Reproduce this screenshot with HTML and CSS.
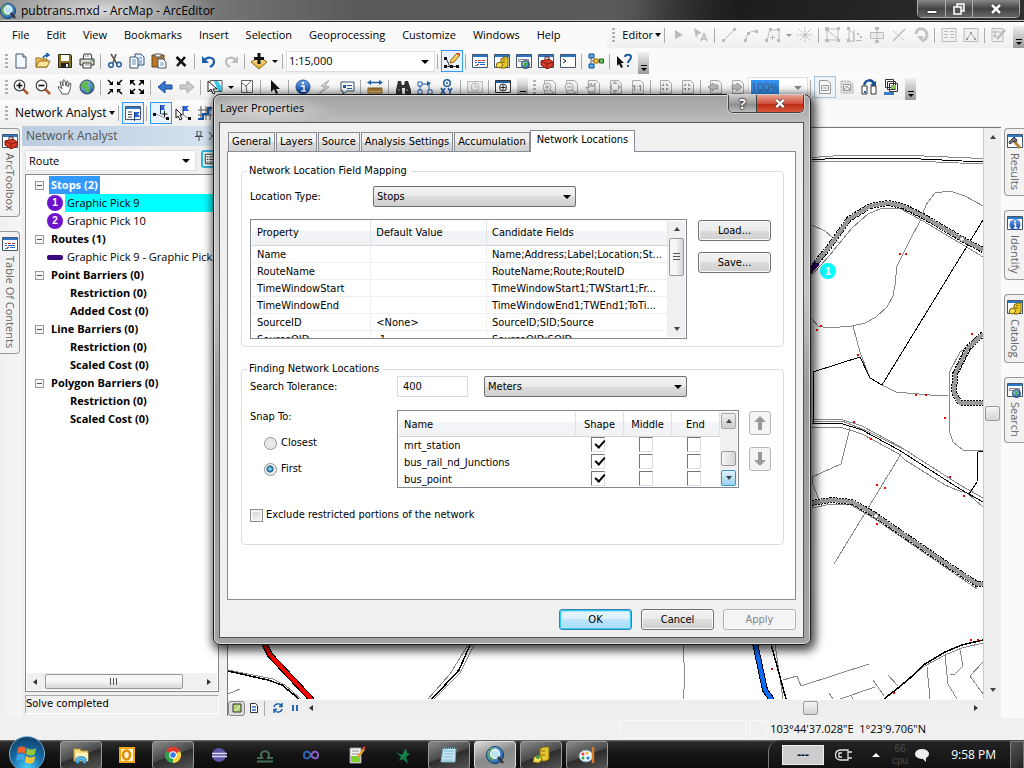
FILE: index.html
```html
<!DOCTYPE html>
<html lang="en">
<head>
<meta charset="utf-8">
<title>pubtrans.mxd - ArcMap - ArcEditor</title>
<link rel="stylesheet" href="styles.css">
</head>
<body>
<svg class="defs" aria-hidden="true">
  <defs>
    <linearGradient id="g-blue" x1="0" y1="0" x2="0" y2="1"><stop offset="0" stop-color="#6fa8ee"/><stop offset="1" stop-color="#0a3fa0"/></linearGradient>
    <linearGradient id="g-gold" x1="0" y1="0" x2="0" y2="1"><stop offset="0" stop-color="#fff0b0"/><stop offset="1" stop-color="#e0a020"/></linearGradient>
    <radialGradient id="g-globe" cx=".35" cy=".3" r=".8"><stop offset="0" stop-color="#a8dcff"/><stop offset="1" stop-color="#12509c"/></radialGradient>
  </defs>
  <symbol id="new" viewBox="0 0 16 16"><path d="M3 1h7l3 3v11H3z" fill="#f4f9ff" stroke="#44566e"/><path d="M10 1v3h3" fill="#cfe0f2" stroke="#44566e"/></symbol>
  <symbol id="open" viewBox="0 0 16 16"><path d="M1 14V5h4l1 1h6v8z" fill="#f2c862" stroke="#96690e"/><path d="M1 14l3-6h11l-3 6z" fill="#ffe69c" stroke="#96690e"/><path d="M8 5c1-3 3-3 5-3M11 0l3 2-3 2" fill="none" stroke="#145ca8" stroke-width="1.5"/></symbol>
  <symbol id="save" viewBox="0 0 16 16"><path d="M1.500 1.500h12l1 1v12h-13z" fill="#8a7420" stroke="#332b10"/><path d="M4 2h8v6H4z" fill="#fff"/><path d="M4 10h8v5H4z" fill="#222"/><path d="M9 11h2v3H9z" fill="#eee"/></symbol>
  <symbol id="print" viewBox="0 0 16 16"><path d="M4 6l1-5h7l1 5" fill="#fff" stroke="#333"/><path d="M1 6h14v6H1z" fill="#d8d8cc" stroke="#333"/><path d="M4 10h8v5H4z" fill="#fff" stroke="#333"/><path d="M6 3h4M6 12h5" stroke="#888"/><path d="M12 8h2" stroke="#2a2"/></symbol>
  <symbol id="cut" viewBox="0 0 16 16"><path d="M4 1l6 10M9 1l-3 9" stroke="#555" stroke-width="1.500"/><circle cx="4" cy="12" r="2.300" fill="none" stroke="#1f5fa5" stroke-width="1.500"/><circle cx="12" cy="11.500" r="2.300" fill="none" stroke="#1f5fa5" stroke-width="1.500"/></symbol>
  <symbol id="copy" viewBox="0 0 16 16"><path d="M6 1h6l3 3v8H6z" fill="#e4f0ff" stroke="#34506e"/><path d="M1 4h6l2 2v9H1z" fill="#fff" stroke="#34506e"/><path d="M3 7h4M3 9h4M3 11h4M9 5h4M10 8h3M10 10h3" stroke="#5a88ba"/></symbol>
  <symbol id="paste" viewBox="0 0 16 16"><path d="M1 2h12v12H1z" fill="#b87828" stroke="#6b4210"/><path d="M4 1h6v3H4z" fill="#eee" stroke="#555"/><path d="M7 6h5l3 3v6H7z" fill="#fff" stroke="#456"/><path d="M9 10h4M9 12h4" stroke="#69c"/></symbol>
  <symbol id="del" viewBox="0 0 16 16"><path d="M3.500 4l9 9M12 4l-8 9" stroke="#111" stroke-width="2.600"/></symbol>
  <symbol id="undo" viewBox="0 0 16 16"><path d="M3 8c3-5 10-4 10 1 0 3-2 4-4 5" fill="none" stroke="#1d5caa" stroke-width="2.200"/><path d="M1 3v7h7z" fill="#1d5caa"/></symbol>
  <symbol id="redo" viewBox="0 0 16 16"><path d="M13 8C10 3 3 4 3 9c0 3 2 4 4 5" fill="none" stroke="#bdbdbd" stroke-width="2.200"/><path d="M15 3v7H8z" fill="#bdbdbd"/></symbol>
  <symbol id="add" viewBox="0 0 16 16"><path d="M0 9l8-5 8 5-8 7z" fill="url(#g-gold)" stroke="#8d6414"/><path d="M8 0v11M3 5.500h10" stroke="#111" stroke-width="3"/></symbol>
  <symbol id="edit" viewBox="0 0 16 16"><path d="M2 5l4 9M2 13.500h12" stroke="#333" fill="none"/><path d="M0 4h3v3H0zM0 12h3v3H0zM6 12h3v3H6zM12 12h3v3h-3z" fill="#111"/><path d="M6 10l1-3 6-7 3 2-6 7z" fill="#ffd25a" stroke="#8a5b12"/><path d="M13 0l3 2" stroke="#d33" stroke-width="2"/></symbol>
  <symbol id="win" viewBox="0 0 16 16"><path d="M.500 1.500h15v13H.500z" fill="#fff" stroke="#44566e"/><path d="M1 2h14v2H1z" fill="#2b78c8"/></symbol>
  <symbol id="toc" viewBox="0 0 16 16"><use href="#win"/><path d="M3 7.500h2M6 7.500h3M10 7.500h3M5 11.500h2" stroke="#c33"/><path d="M3 9.500h2M6 9.500h7M8 11.500h5" stroke="#26c"/><path d="M3 12.500h3" stroke="#2a4"/></symbol>
  <symbol id="cat" viewBox="0 0 16 16"><use href="#win"/><path d="M7 6l3-2h4v9l-3 2H7z" fill="#e8c624" stroke="#786008"/><path d="M8 9h3M9 6.500h2" stroke="#786008"/><path d="M2 14l1-4 4-1 2 3-3 3z" fill="#f2dc56" stroke="#786008"/></symbol>
  <symbol id="search" viewBox="0 0 16 16"><use href="#win"/><path d="M2.500 6.500h10v2h-10z" fill="#eee" stroke="#889"/><circle cx="9.500" cy="11.500" r="4" fill="url(#g-globe)" stroke="#345"/><path d="M8 9l3 1-1 3-2 1z" fill="#4cae3c"/></symbol>
  <symbol id="toolbox" viewBox="0 0 16 16"><use href="#win"/><path d="M3 8l8-2 4 3v4l-6 3-6-4z" fill="#d83a28" stroke="#801a10"/><path d="M3 8l6 3 6-2M9 11v5" stroke="#801a10" fill="none"/><path d="M7 7V4h4v3" fill="none" stroke="#622"/></symbol>
  <symbol id="py" viewBox="0 0 16 16"><use href="#win"/><path d="M3 6l3 2-3 2" fill="none" stroke="#222"/></symbol>
  <symbol id="model" viewBox="0 0 16 16"><path d="M3 3v10M4 8h9" stroke="#555"/><path d="M1 1h5v4H1zM1 11h5v4H1z" fill="#5cacf0" stroke="#124b94"/><path d="M6 6h4v4H6z" fill="#ffcf49" stroke="#97660a"/><path d="M11.500 6h4v4h-4z" fill="#5fc45b" stroke="#19641a"/></symbol>
  <symbol id="whats" viewBox="0 0 16 16"><path d="M1 3v10l2-2 2 4 2-1-2-4h3z" fill="#111"/><path d="M9 4c0-3 6-3 6 0 0 3-3 3-3 6M12 12v2" fill="none" stroke="#1f5fa5" stroke-width="2"/></symbol>
  <symbol id="zin" viewBox="0 0 16 16"><path d="M10 10l5 5" stroke="#b2582a" stroke-width="2.500"/><circle cx="6.500" cy="6.500" r="5.300" fill="#fff" stroke="#444" stroke-width="1.200"/><path d="M6.500 3.500v6M3.500 6.500h6" stroke="#111" stroke-width="1.700"/></symbol>
  <symbol id="zout" viewBox="0 0 16 16"><path d="M10 10l5 5" stroke="#b2582a" stroke-width="2.500"/><circle cx="6.500" cy="6.500" r="5.300" fill="#fff" stroke="#444" stroke-width="1.200"/><path d="M3.500 6.500h6" stroke="#111" stroke-width="1.700"/></symbol>
  <symbol id="pan" viewBox="0 0 16 16"><path d="M5 15c-1-3-3-4-4-7 2-1 3 1 4 2L3 3c2-1 2 1 3 4L6 1c2-1 2 1 3 6l1-5c2 0 1 2 1 6l2-4c2 0 0 4 0 7l-2 4z" fill="#fff" stroke="#555"/></symbol>
  <symbol id="globe" viewBox="0 0 16 16"><circle cx="8" cy="8" r="7" fill="url(#g-globe)" stroke="#345"/><path d="M3 4l4-2 3 2-2 3 3 2-1 4-2 1-2-4-4-2z" fill="#5fb84a"/><path d="M12 5l2 2-1 3z" fill="#5fb84a"/></symbol>
  <symbol id="fin" viewBox="0 0 16 16"><path d="M1 1l4 4M15 1l-4 4M1 15l4-4M15 15l-4-4" stroke="currentColor" stroke-width="1.500"/><path d="M6 2v4H2zM10 2v4h4zM6 14v-4H2zM10 14v-4h4z" fill="currentColor"/></symbol>
  <symbol id="fout" viewBox="0 0 16 16"><path d="M2 2l4 4M14 2l-4 4M2 14l4-4M14 14l-4-4" stroke="currentColor" stroke-width="1.500"/><path d="M1 1h5L1 6zM15 1h-5l5 5zM1 15h5l-5-5zM15 15h-5l5-5z" fill="currentColor"/></symbol>
  <symbol id="back" viewBox="0 0 16 16"><path d="M1 8l7-6v4h7v4H8v4z" fill="#3878d0" stroke="#184a98"/></symbol>
  <symbol id="fwd" viewBox="0 0 16 16"><path d="M15 8L8 2v4H1v4h7v4z" fill="#ccc" stroke="#aaa"/></symbol>
  <symbol id="selfeat" viewBox="0 0 16 16"><path d="M3 1.500h12v11H3z" fill="#fff" stroke="#555"/><path d="M7 2h4l4 7v3h-4z" fill="#34c8e8"/><path d="M1 2v11l3-3 2 5 2-1-2-4h4z" fill="#fff" stroke="#222"/></symbol>
  <symbol id="clear" viewBox="0 0 16 16"><path d="M2.500 1.500h11v12h-11z" fill="#fff" stroke="#666"/><path d="M3 4l4 3 5-5M7 7l1 6" stroke="#666" fill="none"/></symbol>
  <symbol id="arrow" viewBox="0 0 16 16"><path d="M4 1v12l3-3 2 5 2-1-2-4h4z" fill="#111"/></symbol>
  <symbol id="info" viewBox="0 0 16 16"><circle cx="8" cy="8" r="7" fill="url(#g-blue)" stroke="#27549a"/><path d="M6 7h3v5M6 12h5" stroke="#fff" stroke-width="1.500" fill="none"/><circle cx="8" cy="4" r="1.200" fill="#fff"/></symbol>
  <symbol id="bolt" viewBox="0 0 16 16"><path d="M12 1L4 7l4 1-6 7 10-7-4-1z" fill="#ddd" stroke="#aaa"/></symbol>
  <symbol id="popup" viewBox="0 0 16 16"><path d="M2 3h13v9H8l-4 3v-3H2z" fill="#fff" stroke="#356"/><path d="M4 6h3v3H4z" fill="#1f5fa5"/><path d="M8 6.500h5M8 9.500h5" stroke="#1f5fa5"/></symbol>
  <symbol id="measure" viewBox="0 0 16 16"><path d="M1 9h14v5H1z" fill="#f1c36a" stroke="#8f5c12"/><path d="M3 9v3M5 9v3M7 9v3M9 9v3M11 9v3M13 9v3" stroke="#5e3c0c"/><path d="M2 3.500h12" stroke="#1f5fa5" stroke-width="1.500"/><path d="M0 3.500L4 1v5zM16 3.500L12 1v5z" fill="#1f5fa5"/></symbol>
  <symbol id="find" viewBox="0 0 16 16"><path d="M3 2h3l1 4h2l1-4h3l3 9v4h-6V9H7v6H1v-4z" fill="#333"/><path d="M3 11h2M11 11h2" stroke="#aaa"/></symbol>
  <symbol id="route" viewBox="0 0 16 16"><path d="M3 13V5h9v8" fill="none" stroke="#1f5fa5"/><path d="M1 3h4v4H1zM1 11h4v4H1zM11 11h4v4h-4z" fill="#fff" stroke="#1f5fa5"/><path d="M10 2l4 2-4 3z" fill="#1f5fa5"/></symbol>
  <symbol id="xy" viewBox="0 0 16 16"><circle cx="8" cy="4" r="3.300" fill="none" stroke="#1f5fa5" stroke-width="1.500"/><circle cx="8" cy="4" r="1" fill="#1f5fa5"/><path d="M2 9l4 6M6 9l-4 6M9 9l2 3 2-3M11 12v3" stroke="#1f5fa5" stroke-width="1.500" fill="none"/></symbol>
  <symbol id="clock" viewBox="0 0 16 16"><path d="M.500 2.500h15v11H.500z" fill="#eee" stroke="#bbb"/><circle cx="8" cy="8" r="4" fill="none" stroke="#bbb"/><path d="M8 5v3h2" stroke="#bbb" fill="none"/></symbol>
  <symbol id="mag" viewBox="0 0 16 16"><path d="M.500 1.500h15v12H.500z" fill="#fff" stroke="#333"/><path d="M1 2h14v2H1z" fill="#1f5fa5"/><circle cx="8" cy="8.500" r="3.500" fill="#fff" stroke="#222"/><path d="M8 6v5M5.500 8.500h5" stroke="#222"/></symbol>
  <symbol id="page" viewBox="0 0 16 16"><path d="M3.500 1.500h8l3 3v10h-11z" fill="#f2f2f2" stroke="#aaa"/></symbol>
  <symbol id="pzin" viewBox="0 0 16 16"><use href="#page"/><circle cx="6" cy="8" r="4" fill="#eee" stroke="#aaa"/><path d="M6 6v4M4 8h4M9 11l4 3" stroke="#999"/></symbol>
  <symbol id="pzout" viewBox="0 0 16 16"><use href="#page"/><circle cx="6" cy="8" r="4" fill="#eee" stroke="#aaa"/><path d="M4 8h4M9 11l4 3" stroke="#999"/></symbol>
  <symbol id="ppan" viewBox="0 0 16 16"><use href="#page"/><path d="M4 13L1 8l3 1-1-5 3 4V4l2 4 2-4v9z" fill="#eee" stroke="#999"/></symbol>
  <symbol id="pfull" viewBox="0 0 16 16"><use href="#page"/><path d="M8 2l3 3H5zM8 14l3-3H5zM2 8l3-3v6zM14 8l-3-3v6z" fill="#aaa"/></symbol>
  <symbol id="pone" viewBox="0 0 16 16"><use href="#page"/><path d="M5.500 6v6M11.500 6v6M4 7h1M10 7h1" stroke="#999" stroke-width="1.500"/><path d="M8 7h1v1H8zM8 10h1v1H8z" fill="#999"/></symbol>
  <symbol id="pfin" viewBox="0 0 16 16"><use href="#page"/><path d="M7 4v3H4zM9 4v3h3zM7 12V9H4zM9 12V9h3z" fill="#999"/></symbol>
  <symbol id="pback" viewBox="0 0 16 16"><use href="#page"/><path d="M1 8l5-4v2h5v4H6v2z" fill="#bbb" stroke="#999"/></symbol>
  <symbol id="pfwd" viewBox="0 0 16 16"><use href="#page"/><path d="M13 8L8 4v2H3v4h5v2z" fill="#bbb" stroke="#999"/></symbol>
  <symbol id="draft" viewBox="0 0 16 16"><path d="M2.500 1.500h8l3 3v10h-11z" fill="#f6f6f6" stroke="#999"/><path d="M4.500 6.500h7v5h-7zM6 9h4" stroke="#999" fill="none"/></symbol>
  <symbol id="frame" viewBox="0 0 16 16"><path d="M2 2h9l3 3v9H2z" fill="#ddd" stroke="#aaa" stroke-dasharray="2 1"/><path d="M4.500 5.500h7v6h-7z" fill="#eee" stroke="#999"/><path d="M5 11l3-4 3 4" stroke="#999" fill="none"/></symbol>
  <symbol id="swap" viewBox="0 0 16 16"><path d="M3 6c2-6 8-6 10-1" fill="none" stroke="#124e94" stroke-width="2.500"/><path d="M15 2v6l-6-2z" fill="#124e94"/><path d="M1 7h5v8H1zM10 7h5v8h-5z" fill="#fff" stroke="#333"/><path d="M3 12h2v2H3z" fill="#1f5fa5"/></symbol>
  <symbol id="ddp" viewBox="0 0 16 16"><path d="M2.500.500h8v8h-8zM4.500 2.500h8v8h-8zM6.500 4.500h8v8h-8z" fill="#fff" stroke="#333"/><path d="M8 6h5v4H8z" fill="#8bbf54"/><path d="M1 13h10v3H1z" fill="#3b7cc6"/></symbol>
  <symbol id="ea" viewBox="0 0 16 16"><path d="M4 3l8 5-8 4z" fill="#bbb"/></symbol>
  <symbol id="eb" viewBox="0 0 16 16"><path d="M1 1l8 5-4 1-2 4z" fill="#bbb"/><path d="M8 14l3-7 3 7M9 12h4" stroke="#bbb" stroke-width="1.500" fill="none"/></symbol>
  <symbol id="line" viewBox="0 0 16 16"><path d="M3 13L13 3" stroke="#bbb"/><path d="M1 12h3v3H1zM12 1h3v3h-3z" fill="#bbb"/></symbol>
  <symbol id="arc" viewBox="0 0 16 16"><path d="M3 13c0-6 4-9 10-9" stroke="#bbb" fill="none"/><path d="M1 12h3v3H1zM12 3h3v3h-3zM4 5h3v3H4z" fill="#bbb"/></symbol>
  <symbol id="poly" viewBox="0 0 16 16"><path d="M2 13L5 3h9v10" stroke="#bbb" fill="none"/><path d="M0 12h3v3H0zM4 1h3v3H4zM12 1h3v3h-3zM12 12h3v3h-3zM5 10h5v1H5zM7 8h1v5H7z" fill="#bbb"/></symbol>
  <symbol id="star" viewBox="0 0 16 16"><path d="M8 0v6M8 10v6M0 8h6M10 8h6M2 2l4 4M10 10l4 4M14 2l-4 4M6 10l-4 4" stroke="#bbb" stroke-dasharray="2 1"/><path d="M6 6h4v4H6z" fill="#ccc"/></symbol>
  <symbol id="resh" viewBox="0 0 16 16"><path d="M2 2h11v11H2zM2 3l11 9" stroke="#bbb" fill="none"/><path d="M0 0h4v4H0zM0 12h4v3H0zM12 12h3v3h-3zM12 0h3v3h-3z" fill="#bbb"/></symbol>
  <symbol id="cutp" viewBox="0 0 16 16"><path d="M2 2v12h5V7zM7 3v12" stroke="#bbb" fill="none"/><path d="M0 0h3v3H0zM0 12h3v3H0zM10 6h2v2h-2zM13 9h2v2h-2zM9 13h6v1H9z" fill="#bbb"/></symbol>
  <symbol id="split" viewBox="0 0 16 16"><path d="M1.500 5.500h13v6h-13zM8 0v16" fill="#ececec" stroke="#bbb"/><path d="M6 0h4v3H6zM6 13h4v3H6z" fill="#bbb"/></symbol>
  <symbol id="cross" viewBox="0 0 16 16"><path d="M2 14L14 2" stroke="#bbb" stroke-width="1.500"/><path d="M2 4l11 9" stroke="#bbb" stroke-dasharray="2 1"/></symbol>
  <symbol id="rot" viewBox="0 0 16 16"><path d="M3 7c0-7 10-7 11 1 0 3-2 5-5 6" fill="none" stroke="#c4c4c4" stroke-width="3"/><path d="M4 9h6l-1 6z" fill="#c4c4c4"/></symbol>
  <symbol id="attr" viewBox="0 0 16 16"><path d="M1 1.500h14v13H1z" fill="#f1f1f1" stroke="#bbb"/><path d="M3 4.500h4M9 4.500h4M3 7.500h4M9 7.500h4M3 10.500h4M9 10.500h4" stroke="#bbb"/></symbol>
  <symbol id="sketch" viewBox="0 0 16 16"><path d="M1 1.500h14v13H1z" fill="#f1f1f1" stroke="#bbb"/><path d="M4 12l4-6 4 6" stroke="#aaa" fill="none"/><path d="M3 11h2v2H3zM7 5h2v2H7zM11 11h2v2h-2z" fill="#999"/></symbol>
  <symbol id="tmpl" viewBox="0 0 16 16"><path d="M1 1.500h11v13H1z" fill="#f1f1f1" stroke="#bbb"/><path d="M3 4h2v2H3zM3 8h2v2H3zM6 5h4" fill="#bbb" stroke="#bbb"/><path d="M6 12l8-9" stroke="#bbb" stroke-width="2.500"/></symbol>
  <symbol id="flag" viewBox="0 0 16 16"><path d="M8 1h6l-2 2 2 3H8z" fill="#2a68d8"/><path d="M8 1v9" stroke="#123a80"/></symbol>
  <symbol id="nawin" viewBox="0 0 16 16"><use href="#win"/><path d="M3 7h4M3 9.500h4M3 12h4" stroke="#444"/><path d="M9 7h6l-2 2 2 3H9z" fill="#2a68d8"/><path d="M9.500 7v9" stroke="#123a80"/></symbol>
  <symbol id="naadd" viewBox="0 0 16 16"><path d="M1 8l13 6" stroke="#999"/><path d="M0 8h3v3H0zM13 12h3v3h-3z" fill="#111"/><path d="M7 0h5l-1 2 1 3H7z" fill="#2a68d8"/><path d="M7.500 0v9" stroke="#123a80"/><path d="M11.500 6v6M8.500 9h6" stroke="#111"/></symbol>
  <symbol id="nasel" viewBox="0 0 16 16"><path d="M7 9l7 5" stroke="#888"/><path d="M13 12h3v3h-3z" fill="#111"/><use href="#flag"/><path d="M1 4v9l2-2 2 4 2-1-2-4h2z" fill="#fff" stroke="#111"/></symbol>
  <symbol id="nasolve" viewBox="0 0 16 16"><path d="M1 5h14M1 10h14M4 1v14M9 1v14M13 1v14" stroke="#555"/><path d="M1 14h5V9h5V3h4" stroke="#1258a8" stroke-width="2" fill="none"/></symbol>
  <symbol id="hammer" viewBox="0 0 16 16"><use href="#win"/><path d="M7 8l6 7" stroke="#b8843d" stroke-width="3"/><path d="M2 9l5-5 3 3-1 2-2-1-4 3z" fill="#778" stroke="#334"/></symbol>
  <symbol id="ident" viewBox="0 0 16 16"><use href="#win"/><circle cx="8" cy="9.500" r="5.500" fill="url(#g-blue)"/><path d="M7 9h1.500v4M6.500 13h4" stroke="#fff" stroke-width="1.300" fill="none"/><circle cx="8" cy="6.500" r="1" fill="#fff"/></symbol>
  <symbol id="arcmap" viewBox="0 0 18 18"><circle cx="9" cy="9" r="8.500" fill="url(#g-globe)" stroke="#0d3d66"/><path d="M3 4l4-2 2 3-2 3 1 5-2 2-4-5z" fill="#54a64a"/><circle cx="9" cy="8" r="4.300" fill="#cdeeff" fill-opacity=".8" stroke="#f3f8fc" stroke-width="1.500"/><path d="M12 11l5 6" stroke="#333" stroke-width="2.500"/></symbol>
</svg>

<header class="titlebar">
  <svg class="app-icon"><use href="#arcmap"/></svg>
  <h1 class="title">pubtrans.mxd - ArcMap - ArcEditor</h1>
  <div class="winbtns">
    <button class="wb wb-min" aria-label="Minimize"><svg viewBox="0 0 12 12"><path d="M1 7.500h10v3H1z" fill="#fff" stroke="#333"/></svg></button>
    <button class="wb wb-max" aria-label="Restore"><svg viewBox="0 0 12 12"><path d="M4 1h7v7H4z" fill="#777" stroke="#fff" stroke-width="1.500"/><path d="M1 4h7v7H1z" fill="#555" stroke="#fff" stroke-width="1.500"/></svg></button>
    <button class="wb wb-close" aria-label="Close"><svg viewBox="0 0 12 12"><path d="M2 2l8 8M10 2l-8 8" stroke="#333" stroke-width="4"/><path d="M2 2l8 8M10 2l-8 8" stroke="#fff" stroke-width="2.500"/></svg></button>
  </div>
</header>

<nav class="bar menubar">
  <div class="menus">
    <button class="menu">File</button><button class="menu">Edit</button><button class="menu">View</button><button class="menu">Bookmarks</button><button class="menu">Insert</button><button class="menu">Selection</button><button class="menu">Geoprocessing</button><button class="menu">Customize</button><button class="menu">Windows</button><button class="menu">Help</button>
  </div>
  <div class="tools editor">
    <i class="grip"></i><button class="dd">Editor<i class="caret"></i></button><i class="sep"></i>
    <button class="tb"><svg><use href="#ea"/></svg></button><button class="tb"><svg><use href="#eb"/></svg></button><i class="sep"></i>
    <button class="tb"><svg><use href="#line"/></svg></button><button class="tb"><svg><use href="#arc"/></svg></button><button class="tb"><svg><use href="#poly"/></svg></button><i class="drop off"></i><button class="tb"><svg><use href="#star"/></svg></button><i class="sep"></i>
    <button class="tb"><svg><use href="#resh"/></svg></button><button class="tb"><svg><use href="#cutp"/></svg></button><button class="tb"><svg><use href="#split"/></svg></button><button class="tb"><svg><use href="#cross"/></svg></button><button class="tb"><svg><use href="#rot"/></svg></button><i class="sep"></i>
    <button class="tb"><svg><use href="#attr"/></svg></button><button class="tb"><svg><use href="#sketch"/></svg></button><i class="sep"></i>
    <button class="tb"><svg><use href="#tmpl"/></svg></button><i class="more"></i>
  </div>
</nav>

<div class="bar">
  <div class="tools">
    <i class="grip"></i>
    <button class="tb"><svg><use href="#new"/></svg></button><button class="tb"><svg><use href="#open"/></svg></button><button class="tb"><svg><use href="#save"/></svg></button><button class="tb"><svg><use href="#print"/></svg></button><i class="sep"></i>
    <button class="tb"><svg><use href="#cut"/></svg></button><button class="tb"><svg><use href="#copy"/></svg></button><button class="tb"><svg><use href="#paste"/></svg></button><button class="tb"><svg><use href="#del"/></svg></button><i class="sep"></i>
    <button class="tb"><svg><use href="#undo"/></svg></button><button class="tb"><svg><use href="#redo"/></svg></button><i class="sep"></i>
    <button class="tb"><svg><use href="#add"/></svg></button><i class="drop"></i><i class="sep"></i>
    <span class="combo scale"><select aria-label="Map scale"><option>1:15,000</option></select></span><i class="sep"></i>
    <button class="tb on"><svg><use href="#edit"/></svg></button><i class="sep"></i>
    <button class="tb"><svg><use href="#toc"/></svg></button><button class="tb"><svg><use href="#cat"/></svg></button><button class="tb"><svg><use href="#search"/></svg></button><button class="tb"><svg><use href="#toolbox"/></svg></button><button class="tb"><svg><use href="#py"/></svg></button><i class="sep"></i>
    <button class="tb"><svg><use href="#model"/></svg></button><i class="sep"></i>
    <button class="tb"><svg><use href="#whats"/></svg></button><i class="more"></i>
  </div>
</div>

<div class="bar">
  <div class="tools">
    <i class="grip"></i>
    <button class="tb"><svg><use href="#zin"/></svg></button><button class="tb"><svg><use href="#zout"/></svg></button><button class="tb"><svg><use href="#pan"/></svg></button><button class="tb"><svg><use href="#globe"/></svg></button><i class="sep"></i>
    <button class="tb"><svg><use href="#fin"/></svg></button><button class="tb"><svg><use href="#fout"/></svg></button><i class="sep"></i>
    <button class="tb"><svg><use href="#back"/></svg></button><button class="tb"><svg><use href="#fwd"/></svg></button><i class="sep"></i>
    <button class="tb"><svg><use href="#selfeat"/></svg></button><i class="drop"></i><button class="tb"><svg><use href="#clear"/></svg></button><i class="sep"></i>
    <button class="tb"><svg><use href="#arrow"/></svg></button><i class="sep"></i>
    <button class="tb"><svg><use href="#info"/></svg></button><button class="tb"><svg><use href="#bolt"/></svg></button><button class="tb"><svg><use href="#popup"/></svg></button><i class="sep"></i>
    <button class="tb"><svg><use href="#measure"/></svg></button><i class="sep"></i>
    <button class="tb"><svg><use href="#find"/></svg></button><button class="tb"><svg><use href="#route"/></svg></button><button class="tb"><svg><use href="#xy"/></svg></button><i class="sep"></i>
    <button class="tb"><svg><use href="#clock"/></svg></button><i class="sep"></i>
    <button class="tb"><svg><use href="#mag"/></svg></button><i class="more"></i>
  </div>
  <div class="tools layout">
    <i class="grip"></i>
    <button class="tb"><svg><use href="#pzin"/></svg></button><button class="tb"><svg><use href="#pzout"/></svg></button><button class="tb"><svg><use href="#ppan"/></svg></button><button class="tb"><svg><use href="#pfull"/></svg></button><button class="tb"><svg><use href="#pone"/></svg></button><i class="sep"></i>
    <button class="tb"><svg><use href="#pfin"/></svg></button><button class="tb"><svg><use href="#pfin"/></svg></button><i class="sep"></i>
    <button class="tb"><svg><use href="#pback"/></svg></button><button class="tb"><svg><use href="#pfwd"/></svg></button>
    <span class="combo pct"><mark>100%</mark></span><i class="sep"></i>
    <button class="tb soft"><svg><use href="#draft"/></svg></button><button class="tb"><svg><use href="#frame"/></svg></button><button class="tb"><svg><use href="#swap"/></svg></button><button class="tb"><svg><use href="#ddp"/></svg></button><i class="more"></i>
  </div>
</div>

<div class="bar">
  <div class="tools">
    <i class="grip"></i><button class="dd">Network Analyst<i class="caret"></i></button><i class="sep"></i>
    <button class="tb on"><svg><use href="#nawin"/></svg></button><i class="sep"></i>
    <button class="tb on"><svg><use href="#naadd"/></svg></button><button class="tb"><svg><use href="#nasel"/></svg></button><button class="tb"><svg><use href="#nasolve"/></svg></button>
  </div>
</div>

<main class="work">
  <aside class="dock dock-l">
    <button class="vtab"><svg><use href="#toolbox"/></svg><span>ArcToolbox</span></button>
    <button class="vtab"><svg><use href="#toc"/></svg><span>Table Of Contents</span></button>
  </aside>

  <section class="panel">
    <h2 class="panel-title"><span>Network Analyst</span>
      <svg viewBox="0 0 22 10"><path d="M3 0h4v5H3zM1 5.500h8M5 6v4M15 1l7 8M22 1l-7 8" fill="none" stroke="#444"/></svg>
    </h2>
    <div class="panel-pick">
      <span class="combo"><select aria-label="Analysis layer"><option>Route</option></select></span>
      <button class="props" aria-label="Properties"><svg viewBox="0 0 14 14"><path d="M1.500 1.500h11v11h-11z" fill="#fff" stroke="#222"/><path d="M3 4.500h2M6 4.500h6M3 7.500h2M6 7.500h6M3 10.500h2M6 10.500h6" stroke="#222"/></svg></button>
    </div>
    <div class="treebox">
      <ul class="tree">
        <li class="h"><i class="exp"></i><b class="sel">Stops (2)</b></li>
        <li class="leaf"><i class="num">1</i><span class="hl">Graphic Pick 9</span></li>
        <li class="leaf"><i class="num">2</i><span>Graphic Pick 10</span></li>
        <li class="h"><i class="exp"></i><b>Routes (1)</b></li>
        <li class="leaf"><i class="dash"></i><span>Graphic Pick 9 - Graphic Pick 10</span></li>
        <li class="h"><i class="exp"></i><b>Point Barriers (0)</b></li>
        <li class="sub"><b>Restriction (0)</b></li>
        <li class="sub"><b>Added Cost (0)</b></li>
        <li class="h"><i class="exp"></i><b>Line Barriers (0)</b></li>
        <li class="sub"><b>Restriction (0)</b></li>
        <li class="sub"><b>Scaled Cost (0)</b></li>
        <li class="h"><i class="exp"></i><b>Polygon Barriers (0)</b></li>
        <li class="sub"><b>Restriction (0)</b></li>
        <li class="sub"><b>Scaled Cost (0)</b></li>
      </ul>
      <div class="hscroll"><i class="tri l"></i><i class="thumb"></i><i class="tri r"></i></div>
    </div>
    <p class="panel-msg">Solve completed</p>
  </section>

  <section class="mapwin">
    <div class="mapcol">
      <svg class="map" viewBox="228 128 755 571" preserveAspectRatio="xMinYMin slice" shape-rendering="crispEdges">
        <g fill="none" stroke="#888">
          <path d="M812 157.500l28-2h72l71 3M812 161h100l71 3"/>
          <path d="M812 275l17-19 23-28 16-14 12-5 19-1 24 13 37 22 23 14"/>
          <path d="M983 206L965 196 950 191 935 193 926 205 920 221 910 240 897 266 895 285 893 296 887 307 876 317 865 323 852 326 828 328 818 326 812 319M812 225l13 6 14 12"/>
          <path d="M853 326l7 26 10 26 12 7 14 7 34 3h18M983 336l-23 16-11 21v57l4 12 10 8 20 1"/>
          <path d="M812 419h28l22 7 37 20 61 39 23 13M812 427h28l22 7 37 20 6 6 40 25 12 5 10 3 16 14M812 421h30l25 10 42 21"/>
          <path d="M850 428l-9 36-29 13v5l7 18M901 454l-67 110M812 508l19-4 20 1 24 14 70 48 32 22"/>
          <path d="M983 643l-21 5-17 7-22 12-14 12M801 686l68-22M840 699l35-12M851 695l2 4M873 680l11 16M888 675l10 11M927 667l3 32M945 655l3 29 9 15M960 650l3 16-8 8-5 1M983 662l-13 14 13 18M829 693l4 6"/>
          <path d="M468 645l-18 29-22 25M474 645l-14 28-26 26M683 645l2 35-2 19M775 644l8 55M783 680l14-4 4 10 12-4M228 670l45 9 12 6 16 14M228 694l12-5"/>
        </g>
        <g fill="none" stroke="#000">
          <path d="M812 160l26-2h62l83 4M860 357l-47 15v51M812 423h28l22 7 37 20 61 39 23 13M983 451l-5 1-1 30-8 12"/>
          <path d="M983 220L882 385M860 357l10 21 12 7"/>
          <path d="M983 640l-21 5-17 7-20 12-15 14-12 10-14 11" stroke-width="1.500"/>
          <path d="M470 645l-11 25-27 29M771 644l15 55M228 671l40 9 14 5 17 14" stroke-width="1.500"/>
        </g>
        <g fill="none" stroke="#000" stroke-width="6">
          <path stroke-dasharray="2 1" d="M812 268l17-21 20-28 21-13 18-3 15 3 20 10 39 23 21 11M983 334l-15 14-13 26-1 19 6 10h23M812 503l19-3 22 2 22 13 70 48 32 21h6"/>
          <path d="M264 643l6 12 42 45M755 643l10 47 7 10"/>
        </g>
        <g fill="none" stroke="#999" stroke-width="4">
          <path d="M812 268l17-21 20-28 21-13 18-3 15 3 20 10 39 23 21 11M983 334l-15 14-13 26-1 19 6 10h23M812 503l19-3 22 2 22 13 70 48 32 21h6"/>
          <path d="M264 643l6 12 42 45" stroke="#f00"/><path d="M755 643l10 47 7 10" stroke="#0a6cff"/>
        </g>
        <path d="M809 272l8-9" stroke="#30006c" stroke-width="6"/>
        <g fill="#fff" stroke="#555" shape-rendering="auto"><circle cx="962" cy="239" r="2.500"/><circle cx="876" cy="516" r="2.500"/></g>
        <path fill="#f00" d="M899 253h2v2h-2zM905 253h2v2h-2zM820 325h2v2h-2zM816 329h2v2h-2zM857 354h2v2h-2zM915 394h2v2h-2zM925 394h2v2h-2zM971 333h2v2h-2zM944 417h2v2h-2zM853 421h2v2h-2zM870 438h2v2h-2zM876 484h2v2h-2zM884 487h2v2h-2zM949 476h2v2h-2zM963 495h2v2h-2zM876 523h2v2h-2zM970 639h2v2h-2zM977 639h2v2h-2zM893 692h2v2h-2zM771 668h2v2h-2z"/>
        <circle cx="828" cy="271" r="8" fill="#0ff" shape-rendering="auto"/>
        <text x="828" y="275" class="pin">1</text>
      </svg>
      <div class="mapbar">
        <button class="vb on" aria-label="Data view"><svg viewBox="0 0 10 10"><path d="M1 1h8v8H1z" fill="#b8d878" stroke="#333"/><path d="M3 8l5-5" stroke="#fff"/></svg></button>
        <button class="vb" aria-label="Layout view"><svg viewBox="0 0 10 10"><path d="M1.500.500h5l2 2v7h-7z" fill="#fff" stroke="#333"/><path d="M3 4h4M3 7h4" stroke="#2a68b8" stroke-width="1.500"/></svg></button>
        <i class="sep"></i>
        <button class="vb" aria-label="Refresh"><svg viewBox="0 0 10 10"><path d="M1 4c1-4 6-4 8-1M9 0v3.500H6M9 6c-1 4-6 4-8 1M1 10V6.500h3" fill="none" stroke="#1258a8" stroke-width="1.300"/></svg></button>
        <button class="vb" aria-label="Pause"><svg viewBox="0 0 10 10"><path d="M2 2h2v6H2zM6 2h2v6H6z" fill="#2a68b8"/></svg></button>
        <div class="track"><i class="tri l"></i><i class="thumb"></i><i class="tri r"></i></div>
      </div>
    </div>
    <div class="vscroll"><i class="tri u"></i><i class="thumb"></i><i class="tri d"></i></div>
  </section>

  <aside class="dock dock-r">
    <button class="vtab"><svg><use href="#hammer"/></svg><span>Results</span></button>
    <button class="vtab"><svg><use href="#ident"/></svg><span>Identify</span></button>
    <button class="vtab"><svg><use href="#cat"/></svg><span>Catalog</span></button>
    <button class="vtab"><svg><use href="#search"/></svg><span>Search</span></button>
  </aside>
</main>

<div class="status"><span class="cell wide"></span><span class="cell"></span><span class="coords">103°44'37.028"E&nbsp; 1°23'9.706"N</span></div>

<footer class="taskbar">
  <button class="start" aria-label="Start"><svg viewBox="0 0 24 24"><path d="M3 6c3-2 5-2 8 0l-1 6c-3-2-5-2-8 0z" fill="#f0642c"/><path d="M12 6c3 2 6 2 9 0l-1 6c-3 2-6 2-9 0z" fill="#93c83e"/><path d="M2 13c3-2 5-2 8 0l-1 6c-3-2-5-2-8 0z" fill="#3ea6e8"/><path d="M11 14c3 2 6 2 9 0l-1 6c-3 2-6 2-9 0z" fill="#fdc42c"/></svg></button>
  <div class="apps">
    <button class="app run" aria-label="Explorer"><svg viewBox="0 0 18 18"><path d="M2 3h6l1 2h7v10H2z" fill="#f7dc84" stroke="#c09a3c"/><path d="M4 7h12v8H4z" fill="#fff3c0"/><path d="M4 17v-4c0-3 10-3 10 0v4h-3v-3H7v3z" fill="#5cc0f0" stroke="#2d83b8"/></svg></button>
    <button class="app" aria-label="Outlook"><svg viewBox="0 0 18 18"><path d="M1 1h16v16H1z" fill="#f4a816"/><path d="M3 3h12v12H3z" fill="#fff4d0"/><ellipse cx="8.500" cy="9" rx="3.500" ry="4.500" fill="none" stroke="#e08c00" stroke-width="2.500"/></svg></button>
    <button class="app run" aria-label="Chrome"><svg viewBox="0 0 18 18"><path d="M9 9L2 5a8 8 0 0 1 14 0z" fill="#e13a2c"/><path d="M9 9l7-4a8 8 0 0 1-7 12z" fill="#fbd13a"/><path d="M9 9v8A8 8 0 0 1 2 5z" fill="#2fa14c"/><circle cx="9" cy="9" r="3.800" fill="#fff"/><circle cx="9" cy="9" r="2.800" fill="#3b82e0"/></svg></button>
    <button class="app" aria-label="Eclipse"><svg viewBox="0 0 18 18"><circle cx="9" cy="9" r="7" fill="#5c54a4"/><path d="M2 7.500h15M2 10.500h15" stroke="#dcd8f4" stroke-width="1.500"/></svg></button>
    <button class="app" aria-label="Libra"><svg viewBox="0 0 18 18"><path d="M1 12h5c-5-9 11-9 6 0h5M1 15.500h16" fill="none" stroke="#446e54" stroke-width="2"/></svg></button>
    <button class="app" aria-label="Visual Studio"><svg viewBox="0 0 18 18"><path d="M9 9C6 4 2 5 2 9s4 5 7 0" fill="none" stroke="#2b62b8" stroke-width="2"/><path d="M9 9c3-5 7-4 7 0s-4 5-7 0" fill="none" stroke="#8d5cc0" stroke-width="2"/></svg></button>
    <button class="app" aria-label="Notepad++"><svg viewBox="0 0 18 18"><path d="M2 2h11v15H2z" fill="#f4f4f4" stroke="#999"/><path d="M4 5h7M4 8h7" stroke="#888"/><path d="M3 10h9v6H3z" fill="#7fd02c"/><path d="M10 11l6-8" stroke="#e8a030" stroke-width="2.500"/><path d="M15 3l2-2" stroke="#d33" stroke-width="2.500"/></svg></button>
    <button class="app" aria-label="Bird"><svg viewBox="0 0 18 18"><path d="M2 6l6 3 4-7 1 5 3 1-4 3 2 7-5-5-4 2 2-4z" fill="#12824a"/></svg></button>
    <button class="app run" aria-label="Notepad"><svg viewBox="0 0 18 18"><path d="M3 2h13l-1 14H1z" fill="#c8e9f6" stroke="#6fa6bc"/><path d="M4 5h10M4 8h10M3 11h10M3 14h10" stroke="#80b6cc"/><path d="M3 2h13" stroke="#555" stroke-width="2" stroke-dasharray="1 1"/></svg></button>
    <button class="app run cur" aria-label="ArcMap"><svg><use href="#arcmap"/></svg></button>
    <button class="app run" aria-label="ArcCatalog"><svg viewBox="0 0 18 18"><path d="M8 3l3-2h6v12l-3 2H8z" fill="#e6c52c" stroke="#806a10"/><path d="M9 5h4M9 9h4" stroke="#806a10"/><path d="M1 16l1-5 6-2 2 4-3 4z" fill="#f4e058" stroke="#806a10"/><circle cx="6" cy="11" r="2" fill="#3c9a50"/></svg></button>
    <button class="app run" aria-label="Paint"><svg viewBox="0 0 18 18"><ellipse cx="8" cy="10" rx="7" ry="6" fill="#e8f4fc" stroke="#7a9ab0"/><circle cx="5" cy="8" r="1.500" fill="#e33"/><circle cx="9" cy="7" r="1.500" fill="#f8b61c"/><circle cx="5" cy="12" r="1.500" fill="#3a4"/><circle cx="10" cy="12" r="1.500" fill="#27c"/><path d="M15 1v16" stroke="#d8782c" stroke-width="2.500"/></svg></button>
  </div>
  <div class="tray">
    <div class="batt"><span>---</span></div>
    <svg class="t-ic" viewBox="0 0 18 12"><path d="M13 1H5C-1 2-1 10 5 11h8zM7 4h-3v4h3M13 3h4M13 9h4" fill="none" stroke="#ddd" stroke-width="1.300"/></svg>
    <div class="notif">
      <i class="tri u"></i><span class="cpu"><span>66</span><span>cpu</span></span>
      <svg class="t-ic" viewBox="0 0 18 14"><ellipse cx="9" cy="6" rx="7" ry="5" fill="#eee"/><path d="M8 9l5 5v-5z" fill="#eee"/></svg>
      <time class="clock">9:58 PM</time>
    </div>
    <button class="desk" aria-label="Show desktop"></button>
  </div>
</footer>

<div class="dialog" role="dialog" aria-labelledby="dlg-title">
  <div class="dlg-head">
    <h2 id="dlg-title">Layer Properties</h2>
    <div class="dlg-btns">
      <button class="q" aria-label="Help">?</button>
      <button class="x" aria-label="Close"><svg viewBox="0 0 12 12"><path d="M2 2l8 8M10 2l-8 8" stroke="#444" stroke-width="4"/><path d="M2 2l8 8M10 2l-8 8" stroke="#fff" stroke-width="2.500"/></svg></button>
    </div>
  </div>
  <form class="client" onsubmit="return false">
    <div class="tabs" role="tablist">
      <button type="button" role="tab">General</button><button type="button" role="tab">Layers</button><button type="button" role="tab">Source</button><button type="button" role="tab">Analysis Settings</button><button type="button" role="tab">Accumulation</button><button type="button" role="tab" aria-selected="true" class="act">Network Locations</button>
    </div>
    <div class="pane">
      <fieldset class="g1">
        <legend>Network Location Field Mapping</legend>
        <div class="loc">
          <label for="loc">Location Type:</label>
          <span class="sel3d"><select id="loc"><option>Stops</option></select></span>
        </div>
        <div class="maprow">
          <div class="list fields">
            <table>
              <thead><tr><th class="c1">Property</th><th class="c2">Default Value</th><th>Candidate Fields</th></tr></thead>
              <tbody>
                <tr><td>Name</td><td></td><td>Name;Address;Label;Location;St...</td></tr>
                <tr><td>RouteName</td><td></td><td>RouteName;Route;RouteID</td></tr>
                <tr><td>TimeWindowStart</td><td></td><td>TimeWindowStart1;TWStart1;Fr...</td></tr>
                <tr><td>TimeWindowEnd</td><td></td><td>TimeWindowEnd1;TWEnd1;ToTi...</td></tr>
                <tr><td>SourceID</td><td>&lt;None&gt;</td><td>SourceID;SID;Source</td></tr>
                <tr><td>SourceOID</td><td>-1</td><td>SourceOID;SOID</td></tr>
              </tbody>
            </table>
            <div class="vs"><i class="tri u"></i><i class="thumb grip3"></i><i class="tri d"></i></div>
          </div>
          <div class="side"><button type="button" class="btn">Load...</button><button type="button" class="btn">Save...</button></div>
        </div>
      </fieldset>

      <fieldset class="g2">
        <legend>Finding Network Locations</legend>
        <div class="tol">
          <label for="tol">Search Tolerance:</label>
          <input id="tol" type="text" value="400">
          <span class="sel3d"><select aria-label="Units"><option>Meters</option></select></span>
        </div>
        <div class="snap">
          <div class="radios" role="radiogroup" aria-label="Snap To">
            <span>Snap To:</span>
            <label><input type="radio" name="snap">Closest</label>
            <label><input type="radio" name="snap" checked>First</label>
          </div>
          <div class="list layers">
            <table>
              <thead><tr><th>Name</th><th class="k">Shape</th><th class="k">Middle</th><th class="k">End</th></tr></thead>
              <tbody>
                <tr><td>mrt_station</td><td><input type="checkbox" aria-label="mrt_station shape" checked></td><td><input type="checkbox" aria-label="mrt_station middle"></td><td><input type="checkbox" aria-label="mrt_station end"></td></tr>
                <tr><td>bus_rail_nd_Junctions</td><td><input type="checkbox" aria-label="junctions shape" checked></td><td><input type="checkbox" aria-label="junctions middle"></td><td><input type="checkbox" aria-label="junctions end"></td></tr>
                <tr><td>bus_point</td><td><input type="checkbox" aria-label="bus_point shape" checked></td><td><input type="checkbox" aria-label="bus_point middle"></td><td><input type="checkbox" aria-label="bus_point end"></td></tr>
              </tbody>
            </table>
            <div class="vs boxed"><span class="sb"><i class="tri u"></i></span><i class="thumb"></i><span class="sb hot"><i class="tri d"></i></span></div>
          </div>
          <div class="order">
            <button type="button" aria-label="Move up"><svg viewBox="0 0 14 16"><path d="M7 1l6 6H9v8H5V7H1z" fill="#9a9a9a"/></svg></button>
            <button type="button" aria-label="Move down"><svg viewBox="0 0 14 16"><path d="M7 15L1 9h4V1h4v8h4z" fill="#9a9a9a"/></svg></button>
          </div>
        </div>
        <label class="excl"><input type="checkbox">Exclude restricted portions of the network</label>
      </fieldset>
    </div>
    <div class="actions"><button type="button" class="btn ok">OK</button><button type="button" class="btn">Cancel</button><button type="button" class="btn" disabled>Apply</button></div>
  </form>
</div>
</body>
</html>
```
FILE: styles.css
```css
* { box-sizing: border-box; }
html { height: 100%; }
body {
  margin: 0; min-height: 100vh; display: flex; flex-direction: column; position: relative;
  background: #f0f0f0; color: #000; overflow: hidden;
  font: 12px/16px "Open Sans", "Noto Sans", sans-serif;
}
button { font: inherit; color: inherit; background: none; border: 0; padding: 0; margin: 0; }
i { font-style: normal; }
.defs { position: absolute; width: 0; height: 0; }
select { appearance: none; font: inherit; color: inherit; border: 0; background: none; width: 100%; height: 100%; padding: 0; }

.tri { width: 0; height: 0; border: 3px solid transparent; flex: none; }
.tri.u { border-bottom: 4px solid #444; border-top: 0; }
.tri.d { border-top: 4px solid #444; border-bottom: 0; }
.tri.l { border-right: 4px solid #333; border-left: 0; }
.tri.r { border-left: 4px solid #333; border-right: 0; }

/* Title bar */
.titlebar {
  display: flex; align-items: center; height: 22px; flex: none; border-bottom: 1px solid #222; box-shadow: inset 0 -1px #ccc;
  background:
    radial-gradient(ellipse 120px 30px at 100px 10px, rgba(255,255,255,.7), transparent),
    linear-gradient(100deg, transparent 62%, #1d1d1d 72%, #2e2e2e 100%),
    linear-gradient(90deg, #8a8a8a, #777 20%, #595959 35%, #5a5a5a 60%, #2a2a2a 75%);
}
.app-icon { width: 16px; height: 16px; }
.title { margin: 0 0 0 5px; font-size: 12px; font-weight: 400; }
.winbtns { margin: 0 4px 0 auto; align-self: flex-start; display: flex; border: 1px solid #aaa; border-top: 0; border-radius: 0 0 5px 5px; }
.wb { width: 27px; height: 17px; display: grid; place-items: center; background: linear-gradient(#888, #444 50%, #666); }
.wb + .wb { border-left: 1px solid #aaa; }
.wb-close { width: 47px; border-radius: 0 0 5px 0; }
.wb svg { width: 12px; height: 12px; }

/* Menus and toolbars */
.bar { display: flex; height: 26px; flex: none; background: #fafafa; align-items: center; }
.menubar { justify-content: space-between; font-size: 11px; }
.menus { display: flex; gap: 17px; padding-left: 12px; }
.tools { display: flex; align-items: center; height: 25px; background: linear-gradient(#fcfcfc, #f0f0f0); flex: none; }
.layout .sep + .tb, .layout { margin-left: 0; }
.editor { margin-left: 16px; }
.grip { width: 3px; height: 14px; margin: 0 2px 0 5px; background: repeating-linear-gradient(#b0b0b0 0 2px, transparent 2px 4px); flex: none; }
.dd { display: flex; align-items: center; gap: 2px; padding: 0 1px 0 5px; white-space: nowrap; }
.caret { border: 3px solid transparent; border-top: 4px solid #000; border-bottom: 0; }
.sep { width: 1px; height: 15px; margin: 0 3px 0 2px; background: #aaa; flex: none; }
.tb { width: 22px; height: 22px; display: grid; place-items: center; flex: none; }
.tb svg { width: 16px; height: 16px; }
.tb.on { border: 1px solid #3399ff; background: #eaf3fd; }
.tb.soft { border: 1px solid #aac4dc; background: #eef3f8; }
.drop { width: 10px; flex: none; display: grid; place-items: center; }
.drop::before { content: ""; border: 3px solid transparent; border-top: 3px solid #000; border-bottom: 0; }
.drop.off::before { border-top-color: #999; }
.more { width: 11px; height: 22px; margin: 3px 0 0 3px; align-self: flex-end; background: linear-gradient(#f0f0f0, #999); display: flex; flex-direction: column; align-items: center; justify-content: flex-end; padding-bottom: 3px; flex: none; }
.more::before { content: ""; width: 6px; height: 1px; background: #000; margin-bottom: 2px; }
.more::after { content: ""; border: 3px solid transparent; border-top: 3px solid #000; border-bottom: 0; }
.combo { position: relative; display: flex; align-items: center; height: 21px; background: #fff; border: 1px solid #dcdfe4; }
.combo::after { content: ""; position: absolute; right: 5px; top: 8px; border: 4px solid transparent; border-top: 4px solid #000; border-bottom: 0; pointer-events: none; }
.scale { width: 149px; padding-left: 2px; font-size: 11px; }
.pct { width: 60px; padding-left: 2px; font-size: 11px; }
.pct::after { border-top-color: #888; }
.pct mark { background: #3390ee; color: #3b5c86; line-height: 14px; }

/* Workspace */
.work { display: flex; flex: 1; min-height: 0; }
.dock { display: flex; flex-direction: column; gap: 14px; padding-top: 2px; }
.dock-l { width: 22px; align-items: flex-start; background: linear-gradient(90deg, #f0f0f0, #f6f6f6); }
.dock-r { width: 23px; background: #fafafa; align-items: flex-end; }
.vtab { width: 20px; display: flex; flex-direction: column; align-items: center; gap: 4px; padding: 4px 0 5px; border: 1px solid #999; background: #f2f2f2; color: #666; font-size: 11px; }
.dock-l .vtab { border-left: 0; border-radius: 0 4px 4px 0; }
.dock-r .vtab { border-right: 0; border-radius: 4px 0 0 4px; }
.vtab svg { width: 16px; height: 16px; flex: none; }
.vtab span { writing-mode: vertical-rl; white-space: nowrap; }

.panel { width: 197px; flex: none; display: flex; flex-direction: column; padding-bottom: 4px; }
.panel-title { margin: 0; height: 20px; display: flex; align-items: center; justify-content: space-between; padding: 0 3px 0 4px; font-size: 12px; font-weight: 400; color: #555; background: linear-gradient(90deg, #bccde0, #d5e2f0); }
.panel-title svg { width: 22px; height: 10px; }
.panel-pick { display: flex; gap: 5px; margin: 4px 0 3px 3px; }
.panel-pick .combo { flex: 1; padding-left: 3px; font-size: 11px; }
.props { width: 18px; height: 18px; border: 2px solid #36b4e0; border-radius: 3px; background: #eaf8fe; display: grid; place-items: center; flex: none; }
.props svg { width: 12px; height: 14px; }
.treebox { flex: 1; margin-left: 3px; border: 1px solid #888; background: #fff; display: flex; flex-direction: column; justify-content: space-between; min-height: 0; overflow: hidden; }
.tree { list-style: none; margin: 0; padding: 1px 0 0; font-size: 11px; }
.tree li { height: 18px; display: flex; align-items: center; white-space: nowrap; line-height: 18px; }
.tree .h { padding-left: 9px; }
.exp { width: 9px; height: 9px; margin-right: 5px; border: 1px solid #999; background: linear-gradient(#456, #456) center / 5px 1px no-repeat #f6f6f6; flex: none; }
.tree b { padding: 0 2px; font-weight: 700; }
.sel { background: #3399ff; color: #fff; }
.tree .leaf { padding-left: 21px; }
.num { width: 16px; height: 16px; margin-right: 2px; border-radius: 50%; background: #6f12cc; color: #fff; font: 700 10px/16px "Liberation Sans", sans-serif; text-align: center; flex: none; }
.dash { width: 16px; height: 5px; margin-right: 2px; border-radius: 2px; background: #3c0880; flex: none; }
.leaf span { padding-left: 2px; flex: 1; overflow: hidden; }
.hl { background: #0ff; }
.tree .sub { padding-left: 42px; }
.hscroll { height: 17px; margin: 1px; display: flex; align-items: center; padding: 0 6px; gap: 8px; background: #f0f0f0; }
.hscroll .tri.r { margin-left: auto; }
.thumb { border: 1px solid #999; border-radius: 2px; background: linear-gradient(#f6f6f6, #d4d4d4); flex: none; }
.hscroll .thumb { width: 138px; height: 15px; background: repeating-linear-gradient(90deg, #555 0 1px, transparent 1px 3px) center / 8px 7px no-repeat, linear-gradient(#f6f6f6 45%, #d8d8d8); }
.panel-msg { margin: 3px 0 0 3px; height: 19px; border: 1px solid #fff; border-left-color: #aaa; border-top-color: #aaa; font: 11px/15px "DejaVu Sans Condensed", "Noto Sans", sans-serif; }

.mapwin { flex: 1; min-width: 0; display: flex; margin: 1px 0 2px 8px; border-top: 1px solid #777; border-left: 1px solid #777; background: #eee; }
.mapcol { flex: 1; min-width: 0; display: flex; flex-direction: column; }
.map { flex: 1; min-height: 0; width: 100%; background: #fff; border-right: 1px solid #ccc; display: block; }
.pin { font: 700 10px "Liberation Sans", sans-serif; fill: #fff; text-anchor: middle; }
.mapbar { height: 17px; flex: none; display: flex; align-items: center; border-top: 1px solid #fff; }
.vb { width: 17px; height: 15px; display: grid; place-items: center; }
.vb svg { width: 10px; height: 10px; }
.vb.on { border: 1px solid #888; border-radius: 3px; background: #ddd; }
.mapbar .sep { margin: 0 4px 0 2px; }
.track { flex: 1; height: 100%; display: flex; align-items: center; justify-content: space-between; padding: 0 6px; background: #eee; }
.track .thumb { width: 15px; height: 14px; margin-left: 334px; }
.vscroll { width: 17px; flex: none; background: #eee; display: flex; flex-direction: column; align-items: center; justify-content: space-between; padding: 7px 0 24px; }
.vscroll .thumb { width: 15px; height: 15px; }

.status { height: 22px; flex: none; display: flex; align-items: center; justify-content: flex-end; gap: 3px; font-size: 11px; padding-right: 98px; }
.cell { width: 18px; height: 18px; border: 1px solid #f8f8f8; }
.cell.wide { width: 127px; }

/* Taskbar */
.taskbar { height: 29px; flex: none; display: flex; align-items: center; background: linear-gradient(#777 0, #2b2b2b 2px, #141414 50%, #0c0c0c); color: #fff; }
.start { width: 36px; height: 36px; margin: 0 14px 2px 9px; border-radius: 50%; border: 1px solid #7ab0cc; background: radial-gradient(circle at 50% 90%, #48d0ff, #186ca8 45%, #0c3458); display: grid; place-items: center; flex: none; }
.start svg { width: 24px; height: 24px; }
.apps { display: flex; gap: 4px; margin-left: 1px; }
.app { width: 42px; height: 28px; display: grid; place-items: center; border-radius: 3px; }
.app svg { width: 18px; height: 18px; }
.app.run { border: 1px solid #999; background: linear-gradient(160deg, #8a8a8a, #484848 50%, #2c2c2c 52%, #555); }
.app.cur { border-color: #ddd; background: linear-gradient(160deg, #ddd, #888 50%, #999); }
.tray { margin-left: auto; display: flex; align-items: center; align-self: stretch; border-left: 1px solid #777; border-radius: 12px 0 0 0; padding-left: 13px; background: linear-gradient(#555 0, #222 2px, #111); }
.batt { width: 42px; height: 20px; background: #ccc; color: #111; text-align: center; line-height: 18px; border: 1px solid #eee; font-weight: 700; margin-right: 11px; }
.t-ic { width: 18px; height: 14px; flex: none; }
.notif { display: flex; align-items: center; margin-left: 19px; }
.notif .tri { border-bottom-color: #fff; border-left-width: 4px; border-right-width: 4px; }
.cpu { display: flex; flex-direction: column; align-items: center; font: 10px/12px "Liberation Sans", sans-serif; color: #4a4a4a; margin: 0 5px 0 12px; }
.clock { margin: 0 14px 0 20px; white-space: nowrap; }
.desk { width: 14px; height: 28px; border: 1px solid #777; background: linear-gradient(135deg, #555, #222); }

/* Layer properties dialog */
.dialog {
  position: absolute; left: 213px; top: 94px; width: 598px; padding: 0 6px 6px 5px; border: 1px solid #1b1b1b; border-radius: 7px;
  background:
    radial-gradient(ellipse 70px 16px at 50px 14px, rgba(255,255,255,.5), transparent),
    linear-gradient(#a0a0a0, #bdbdbd 28px, #c6c6c6 200px, #9c9c9c 290px, #a4a4a4);
  box-shadow: inset 0 0 0 1px #ddd, 2px 3px 10px 3px rgba(0,0,0,.7);
  font: 11px/14px "DejaVu Sans Condensed", "Noto Sans", sans-serif;
}
.dlg-head { height: 27px; display: flex; justify-content: space-between; align-items: flex-start; }
.dlg-head h2 { margin: 0 0 0 1px; font: 400 11px/26px "Open Sans", "Noto Sans", sans-serif; }
.dlg-btns { display: flex; border: 1px solid #444; border-top: 0; border-radius: 0 0 5px 5px; overflow: hidden; box-shadow: 0 0 0 1px #ccc; }
.q, .x { height: 17px; display: grid; place-items: center; }
.q { width: 27px; color: #fff; font: 700 14px/16px "Open Sans", sans-serif; text-shadow: 0 0 2px #000, 0 0 2px #000; background: linear-gradient(#ccc, #999 50%, #888 50%, #bbb); }
.x { width: 47px; border-left: 1px solid #444; background: linear-gradient(#e6a493, #d1503c 50%, #bb2a14 50%, #d8563a); }
.x svg { width: 12px; height: 11px; }
.client { border: 1px solid #555; background: #f0f0f0; padding: 7px; }
.tabs { display: flex; align-items: flex-end; padding-left: 1px; height: 21px; position: relative; }
.tabs button { height: 19px; padding: 0 3px; margin-right: 1px; border: 1px solid #898c95; border-bottom: 0; background: linear-gradient(#f2f2f2 50%, #dcdcdc 50%, #d0d0d0); white-space: nowrap; }
.tabs .act { height: 22px; padding: 0 6px 3px; margin: 0 0 -1px -1px; background: #fff; position: relative; }
.pane { border: 1px solid #898c95; background: #fff; padding: 12px 11px 54px 13px; }
fieldset { margin: 0; padding: 0 12px 7px 8px; min-width: 0; border: 1px solid #d5dfe5; border-radius: 4px; }
legend { padding: 0 4px 0 2px; margin-left: -3px; }
.loc { display: flex; align-items: center; margin-top: 8px; }
.loc label { width: 123px; }
.sel3d { position: relative; width: 203px; height: 21px; border: 1px solid #707070; border-radius: 2px; background: linear-gradient(#f2f2f2, #ebebeb 50%, #ddd 50%, #cfcfcf); }
.sel3d select { padding-left: 3px; }
.sel3d::after { content: ""; position: absolute; right: 4px; top: 8px; border: 4px solid transparent; border-top: 4px solid #000; border-bottom: 0; pointer-events: none; }
.maprow { display: flex; gap: 11px; margin-top: 12px; }
.list { display: flex; border: 1px solid #828790; background: #fff; padding: 1px; overflow: hidden; }
.fields { flex: 1; height: 120px; }
.list table { flex: 1; border-collapse: collapse; table-layout: fixed; height: 0; }
.list th { height: 24px; padding: 0 5px; font-weight: 400; text-align: left; background: linear-gradient(#fff 40%, #f2f4f7 42%, #f0f2f5); border-right: 1px solid #dfe3e8; border-bottom: 1px solid #d5d5d5; white-space: nowrap; }
.list td { height: 17px; padding: 0 5px; white-space: nowrap; overflow: hidden; line-height: 14px; }
.fields td { border-right: 1px solid #eee; border-bottom: 1px solid #eee; padding-top: 2px; }
.c1 { width: 119px; } .c2 { width: 116px; }
.vs { width: 17px; flex: none; background: #f0f0f0; display: flex; flex-direction: column; align-items: center; padding: 6px 0; gap: 7px; }
.vs .thumb { width: 15px; background: linear-gradient(90deg, #f6f6f6, #d4d4d4); }
.vs .tri.d { margin-top: auto; }
.vs .grip3 { height: 38px; background: repeating-linear-gradient(#555 0 1px, transparent 1px 3px) center / 7px 8px no-repeat, linear-gradient(90deg, #f6f6f6 45%, #d4d4d4); }
.side { display: flex; flex-direction: column; gap: 11px; padding-top: 1px; }
.btn { width: 73px; height: 21px; border: 1px solid #707070; border-radius: 3px; box-shadow: inset 0 0 0 1px #fcfcfc; background: linear-gradient(#f2f2f2, #ebebeb 50%, #ddd 50%, #cfcfcf); text-align: center; }
.g2 { margin-top: 15px; padding-bottom: 22px; }
.tol { display: flex; align-items: center; }
.tol label { width: 147px; }
.tol input { width: 71px; height: 21px; margin-right: 16px; padding: 0 5px; border: 1px solid #d8dce2; font: inherit; }
.snap { display: flex; margin-top: 13px; }
.radios { width: 147px; display: flex; flex-direction: column; gap: 12px; }
.radios label { display: flex; align-items: center; gap: 4px; padding-left: 14px; }
input[type=radio] { appearance: none; width: 13px; height: 13px; margin: 0; border: 1px solid #8e8f8f; border-radius: 50%; background: radial-gradient(#f4f4f4, #ccc); box-shadow: inset 0 0 0 1px #f6f6f6; }
input[type=radio]:checked { background: radial-gradient(circle at 45% 45%, #7fd4f4 0 1px, #155b86 3px 3px, #e4e8ea 4px); }
.layers { width: 342px; height: 78px; }
.layers th { height: 24px; padding-top: 3px; }
.layers .k { width: 48px; text-align: center; padding: 3px 0 0; }
.layers td + td { text-align: center; padding: 0 4px 0 0; }
.layers td { padding-top: 2px; }
.layers input { appearance: none; display: block; width: 14px; height: 15px; margin: 0 auto; border: 1px solid #ddd; border-top: 1px solid #777; border-left: 1px solid #777; position: relative; }
.layers input:checked::before { content: ""; position: absolute; left: 3px; top: 2px; width: 8px; height: 4px; border: solid #000; border-width: 0 0 2px 2px; transform: rotate(-48deg); }
.boxed { padding: 1px 0; gap: 0; justify-content: space-between; }
.boxed .thumb { height: 15px; margin: 22px 0 4px; }
.sb { width: 15px; height: 16px; border: 1px solid #aaa; border-radius: 2px; display: grid; place-items: center; background: linear-gradient(#eee, #ccc); flex: none; }
.sb.hot { border-color: #3c8fc0; background: linear-gradient(#dff3fd, #98d2f2); }
.sb .tri.d { margin: 0; }
.order { display: flex; flex-direction: column; gap: 12px; margin: 1px 0 0 10px; }
.order button { width: 22px; height: 24px; border: 1px solid #b8b8b8; border-radius: 3px; background: #f4f4f4; display: grid; place-items: center; }
.order svg { width: 14px; height: 16px; }
.excl { display: flex; align-items: center; gap: 3px; margin-top: 20px; }
.excl input { appearance: none; width: 13px; height: 13px; margin: 0; border: 1px solid #8e8f8f; background: linear-gradient(135deg, #cfd3d8, #f6f6f6); box-shadow: inset 0 0 0 2px #f4f4f4; }
.actions { display: flex; justify-content: flex-end; gap: 9px; margin-top: 9px; }
.actions .btn:disabled { color: #838383; border-color: #adb2b5; background: #f4f4f4; }
.ok { border-color: #3c7fb1; box-shadow: inset 0 0 0 1px #30c8f4, inset 0 0 0 2px #a8e6fa; background: linear-gradient(#eaf6fd, #d9f0fc 50%, #bee6fd 50%, #a7d9f5); }
```
